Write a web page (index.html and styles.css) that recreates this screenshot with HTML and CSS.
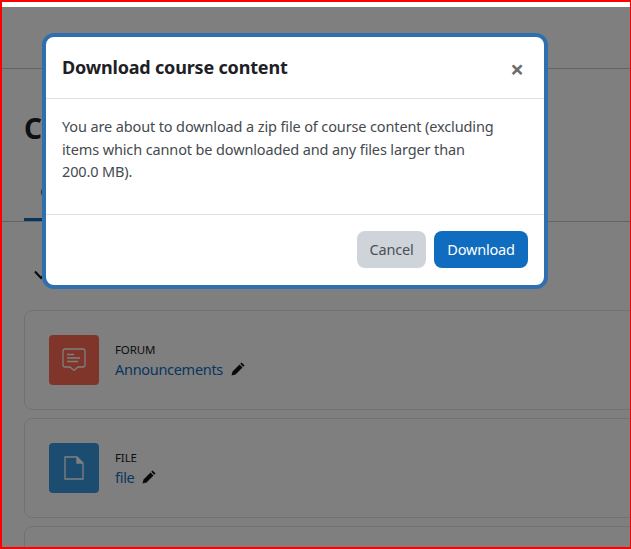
FILE: index.html
```html
<!DOCTYPE html>
<html lang="en">
<head>
    <meta charset="UTF-8">
    <meta name="viewport" content="width=device-width, initial-scale=1.0">
    <title>Download course content</title>
    <link rel="stylesheet" href="styles.css">
</head>
<body>
    <div class="frame">
        <div class="top-strip"></div>
        <div class="page">
            <div class="navbar"></div>
            <div class="content">
                <h1 class="course-title">C</h1>
                <div class="tabs"><span class="tab-active">Course</span></div>
                <div class="section-toggle">
                    <svg width="14" height="10" viewBox="0 0 14 10"><path d="M1 1.5 L7 8 L13 1.5" fill="none" stroke="#111" stroke-width="2"/></svg>
                </div>
                <div class="activity-card">
                    <div class="activity-icon icon-forum">
                        <svg width="26" height="26" viewBox="0 0 26 26" fill="none" stroke="#ffffff" stroke-width="1.3">
                            <path d="M4 2 H22 Q24 2 24 4 V18 Q24 20 22 20 H17 L13 23.5 L9 20 H4 Q2 20 2 18 V4 Q2 2 4 2 Z"/>
                            <path d="M6 7.5 H13 M6 11 H19 M6 14.5 H17"/>
                        </svg>
                    </div>
                    <div class="activity-text">
                        <div class="activity-type">FORUM</div>
                        <div class="activity-name"><a href="#">Announcements</a>
                            <svg class="pencil" width="14" height="14" viewBox="0 0 14 14"><path d="M10.6 0.4 L13.6 3.4 L12.2 4.8 L9.2 1.8 Z M8.5 2.5 L11.5 5.5 L4.5 12.5 L0.5 13.5 L1.5 9.5 Z" fill="#151515"/></svg>
                        </div>
                    </div>
                </div>
                <div class="activity-card">
                    <div class="activity-icon icon-file">
                        <svg width="22" height="26" viewBox="0 0 22 26" fill="none" stroke="#ffffff" stroke-width="1.3">
                            <path d="M2 2 H14 L20 8 V24 H2 Z"/>
                            <path d="M14 2 V8 H20" fill="#ffffff"/>
                        </svg>
                    </div>
                    <div class="activity-text">
                        <div class="activity-type">FILE</div>
                        <div class="activity-name"><a href="#">file</a>
                            <svg class="pencil" width="14" height="14" viewBox="0 0 14 14"><path d="M10.6 0.4 L13.6 3.4 L12.2 4.8 L9.2 1.8 Z M8.5 2.5 L11.5 5.5 L4.5 12.5 L0.5 13.5 L1.5 9.5 Z" fill="#151515"/></svg>
                        </div>
                    </div>
                </div>
                <div class="activity-card"></div>
            </div>
            <div class="backdrop"></div>
        </div>

        <div class="modal">
            <div class="modal-header">
                <h5>Download course content</h5>
                <span class="close">&times;</span>
            </div>
            <div class="modal-body">
                <p>You are about to download a zip file of course content (excluding items which cannot be downloaded and any files larger than 200.0&nbsp;MB).</p>
            </div>
            <div class="modal-footer">
                <button class="btn btn-cancel">Cancel</button>
                <button class="btn btn-download">Download</button>
            </div>
        </div>
    </div>
</body>
</html>
```

FILE: styles.css
```css
html, body {
    margin: 0;
    padding: 0;
    height: 100%;
}
body {
    font-family: "Noto Sans", "Open Sans", sans-serif;
    font-size: 15px;
    color: #1d2125;
    background-color: #ffffff;
}
.frame {
    position: relative;
    box-sizing: border-box;
    width: 631px;
    height: 549px;
    border: solid #ff0000;
    border-width: 2px 1px 2px 2px;
    overflow: hidden;
    display: flex;
    flex-direction: column;
}
.top-strip {
    height: 5px;
    flex-shrink: 0;
}
.page {
    position: relative;
    flex: 1;
    overflow: hidden;
    background-color: #ffffff;
}
.backdrop {
    position: absolute;
    inset: 0;
    background: rgba(0, 0, 0, 0.5);
}
.navbar {
    height: 61px;
    border-bottom: 1px solid #c8c8c8;
}
.content {
    padding-left: 22px;
}
.course-title {
    margin: 0;
    padding-top: 38px;
    font-size: 28px;
    line-height: 42px;
    font-weight: 700;
}
.tabs {
    margin: 0 0 0 -22px;
    padding: 31px 0 0 22px;
    height: 73px;
    box-sizing: border-box;
    border-bottom: 1px solid #c8c8c8;
}
.tab-active {
    display: inline-block;
    height: 41px;
    padding: 0 16px;
    border-bottom: 3px solid #0f6cbf;
    box-sizing: border-box;
    line-height: 22px;
    font-size: 15px;
    color: #0f6cbf;
}
.section-toggle {
    height: 88px;
    padding: 48px 0 0 10px;
    box-sizing: border-box;
}
.section-toggle svg {
    display: block;
}
.activity-card {
    width: 700px;
    height: 100px;
    box-sizing: border-box;
    margin-bottom: 8px;
    padding: 24px;
    border: 1px solid #dee2e6;
    border-radius: 8px;
    display: flex;
    gap: 16px;
    align-items: center;
}
.activity-icon {
    width: 50px;
    height: 50px;
    border-radius: 4px;
    flex-shrink: 0;
    display: flex;
    align-items: center;
    justify-content: center;
}
.icon-forum {
    background-color: #ff6a52;
}
.icon-file {
    background-color: #399be2;
}
.activity-type {
    font-size: 11.5px;
    line-height: 17px;
    letter-spacing: -0.1px;
    color: #1d2125;
}
.activity-name {
    font-size: 14.5px;
    line-height: 22px;
    letter-spacing: -0.3px;
    display: flex;
    align-items: center;
    gap: 8px;
}
.activity-name a {
    color: #0f6cbf;
    text-decoration: none;
}
.modal {
    position: absolute;
    left: 40px;
    top: 31px;
    width: 506px;
    box-sizing: border-box;
    background: #ffffff;
    border: 4px solid #2f6fb0;
    border-radius: 12px;
}
.modal-header {
    height: 62px;
    box-sizing: border-box;
    padding: 0 16px 2px;
    border-bottom: 1px solid #dee2e6;
    display: flex;
    align-items: center;
    justify-content: space-between;
}
.modal-header h5 {
    margin: 0;
    font-size: 18px;
    font-weight: 700;
    line-height: 1;
    letter-spacing: -0.18px;
}
.close {
    font-size: 24px;
    font-weight: 700;
    color: #6c6c6c;
    line-height: 1;
    margin: 4px 4px 0 0;
}
.modal-body {
    height: 116px;
    box-sizing: border-box;
    padding: 16px;
    border-bottom: 1px solid #dee2e6;
}
.modal-body p {
    margin: 0;
    font-size: 14.5px;
    line-height: 22.5px;
    letter-spacing: -0.13px;
    color: #454a4f;
}
.modal-footer {
    height: 70px;
    box-sizing: border-box;
    padding: 16px;
    display: flex;
    justify-content: flex-end;
    align-items: flex-start;
    gap: 8px;
}
.btn {
    height: 37px;
    border: none;
    border-radius: 8px;
    padding: 0 13px 2px;
    font-family: inherit;
    font-size: 14.5px;
    letter-spacing: -0.2px;
}
.btn-cancel {
    width: 69px;
    padding: 0 0 2px;
    background-color: #ced4da;
    color: #495057;
}
.btn-download {
    width: 94px;
    padding: 0 0 2px;
    background-color: #0f6cbf;
    color: #ffffff;
}
```
